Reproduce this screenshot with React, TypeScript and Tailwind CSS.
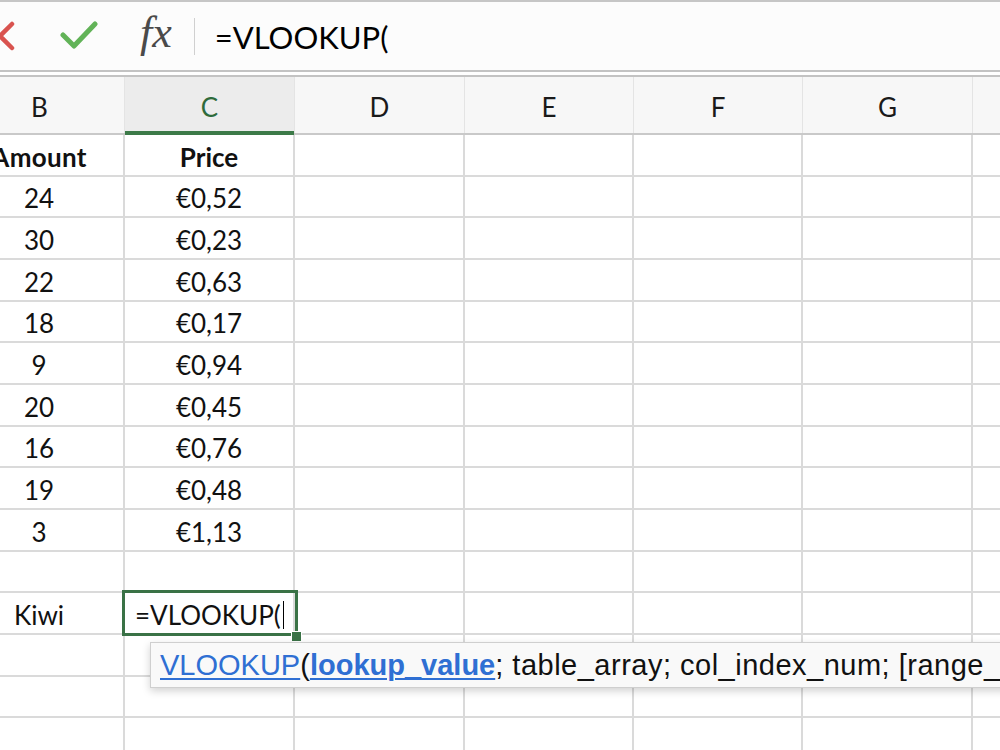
const COLS = [
  { id: "B", w: "w-[170px]" },
  { id: "C", w: "w-[170px]" },
  { id: "D", w: "w-[170px]" },
  { id: "E", w: "w-[169px]" },
  { id: "F", w: "w-[169px]" },
  { id: "G", w: "w-[170px]" },
  { id: "H", w: "w-[170px]" },
];

const ROW_H = ["h-[42px]", "h-[41px]", "h-[42px]"];

type Row = { b: string; c: string; bold?: boolean; editing?: boolean };

const ROWS: Row[] = [
  { b: "Amount", c: "Price", bold: true },
  { b: "24", c: "€0,52" },
  { b: "30", c: "€0,23" },
  { b: "22", c: "€0,63" },
  { b: "18", c: "€0,17" },
  { b: "9", c: "€0,94" },
  { b: "20", c: "€0,45" },
  { b: "16", c: "€0,76" },
  { b: "19", c: "€0,48" },
  { b: "3", c: "€1,13" },
  { b: "", c: "" },
  { b: "Kiwi", c: "=VLOOKUP(", editing: true },
  { b: "", c: "" },
  { b: "", c: "" },
  { b: "", c: "" },
];

function FormulaBar() {
  return (
    <div className="h-[70px] border-t-2 border-[#c6c6c6] bg-[#fcfcfc] flex items-center">
      <svg width="32" height="32" viewBox="0 0 32 32" className="-ml-[16px] mr-[44px]">
        <path d="M4 4 L28 28 M28 4 L4 28" stroke="#d9534f" strokeWidth="4.5" strokeLinecap="round" fill="none" />
      </svg>
      <svg width="38" height="30" viewBox="0 0 38 30" className="mt-[-2px]">
        <path d="M3 15 L14 26 L35 4" stroke="#62b358" strokeWidth="5" strokeLinecap="round" strokeLinejoin="round" fill="none" />
      </svg>
      <span className="ml-[42px] font-['Liberation_Serif',serif] italic text-[44px] leading-none text-[#4a4a4a] mt-[-6px]">
        fx
      </span>
      <div className="ml-[22px] w-px h-[37px] bg-[#d0d0d0]" />
      <span className="ml-[20px] font-['Lato',sans-serif] text-[31px] text-black leading-none mt-[2px]">=VLOOKUP(</span>
    </div>
  );
}

function HeaderRow() {
  return (
    <div className="flex -ml-[45px] h-[58px] bg-[#f7f7f7] border-b-2 border-[#c9c9c9]">
      {COLS.map((col) => (
        <div
          key={col.id}
          className={
            col.id === "C"
              ? `${col.w} shrink-0 relative flex items-center justify-center bg-[#ececec] border-r border-[#e4e4e4] text-[#2e6b3b]`
              : `${col.w} shrink-0 flex items-center justify-center border-r border-[#e4e4e4] text-[#1a1a1a]`
          }
        >
          <span className="text-[26px] leading-none mt-[4px]">{col.id}</span>
          {col.id === "C" && <div className="absolute left-0 right-0 -bottom-[2px] h-[4px] bg-[#3c7a48]" />}
        </div>
      ))}
    </div>
  );
}

function Cell({ row, col, h }: { row: Row; col: (typeof COLS)[number]; h: string }) {
  const base = `${col.w} ${h} shrink-0 border-r-2 border-b-2 border-[#dadada] flex items-center pt-[4px]`;
  if (col.id === "B") {
    return (
      <div className={`${base} justify-center`}>
        <span className={row.bold ? "font-bold tracking-[0.3px]" : ""}>{row.b}</span>
      </div>
    );
  }
  if (col.id === "C") {
    if (row.editing) {
      return (
        <div className={`${base} relative pl-[10px]`}>
          <span>{row.c}</span>
          <span className="inline-block w-px h-[28px] bg-black ml-[2px]" />
          <div className="absolute -left-[3px] -top-[3px] w-[176px] h-[46px] border-[3px] border-[#3a7246]" />
          <div className="absolute left-[166px] top-[38px] w-[11px] h-[11px] bg-[#3a7246] border border-white" />
        </div>
      );
    }
    return (
      <div className={`${base} justify-center`}>
        <span className={row.bold ? "font-bold" : ""}>{row.c}</span>
      </div>
    );
  }
  return <div className={base} />;
}

function Tooltip() {
  return (
    <div className="absolute left-[150px] top-[642px] w-[900px] h-[46px] bg-[#f9f9f9] border border-[#cfcfcf] shadow-[0_3px_8px_rgba(0,0,0,0.18)] flex items-center pl-[9px] font-['Liberation_Sans',sans-serif] text-[29px] leading-none whitespace-nowrap text-[#111]">
      <span className="text-[#2f6fd3] underline underline-offset-[3px] decoration-[2px]">VLOOKUP</span>
      <span>(</span>
      <span className="text-[#2f6fd3] font-bold underline underline-offset-[3px] decoration-[2px]">lookup_value</span>
      <span className="tracking-[0.5px]">; table_array; col_index_num; [range_lookup])</span>
    </div>
  );
}

export default function App() {
  return (
    <div className="w-[1000px] h-[750px] overflow-hidden relative bg-white font-['Lato',sans-serif]">
      <FormulaBar />
      <div className="h-[7px] border-t-2 border-b-2 border-[#c3c3c3] bg-white" />
      <HeaderRow />
      <div className="-ml-[45px] text-[26px] text-[#111]">
        {ROWS.map((row, i) => (
          <div key={i} className="flex">
            {COLS.map((col) => (
              <Cell key={col.id} row={row} col={col} h={ROW_H[i % 3]} />
            ))}
          </div>
        ))}
      </div>
      <Tooltip />
    </div>
  );
}
